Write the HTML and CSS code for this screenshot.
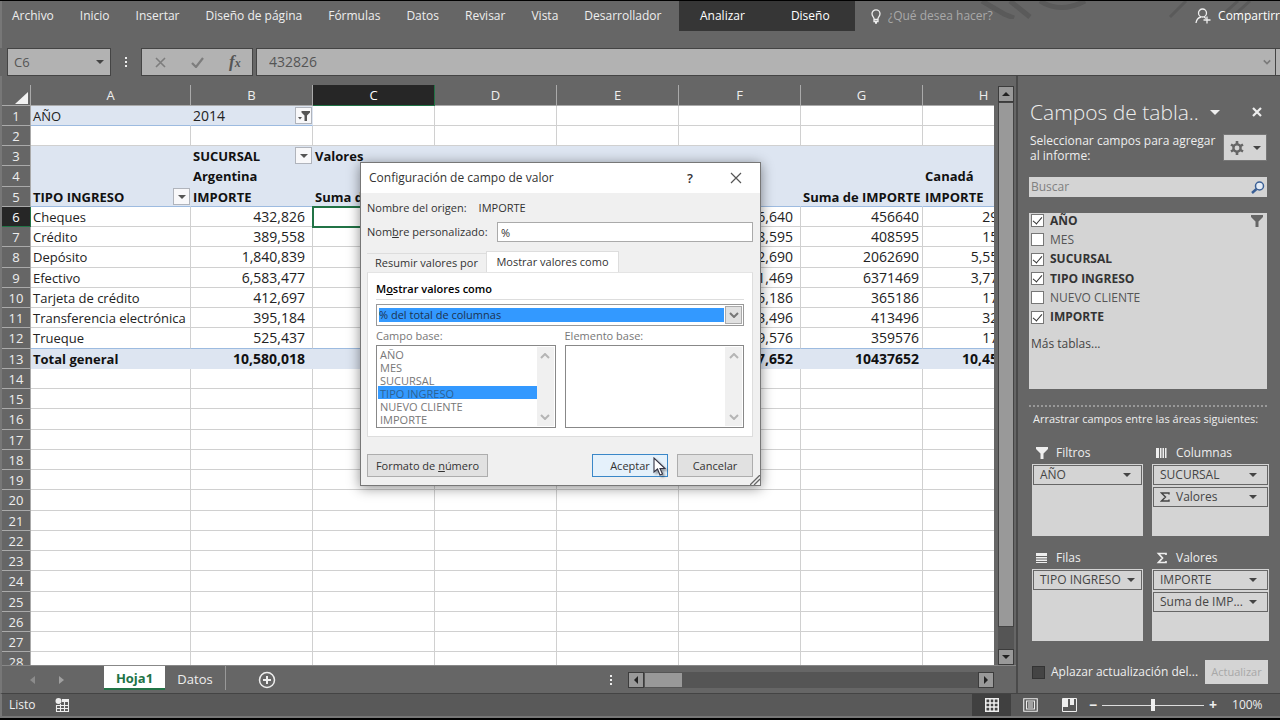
FILE: index.html
```html
<!DOCTYPE html>
<html lang="es">
<head>
<meta charset="utf-8">
<title>Hoja1 - Excel</title>
<link rel="stylesheet" href="styles.css">
</head>
<body>
<svg class="defs" aria-hidden="true">
  <symbol id="caret" viewBox="0 0 8 4"><path d="M0 0h8L4 4z" fill="currentColor"/></symbol>
  <symbol id="chev" viewBox="0 0 10 6"><path d="M1 1l4 4 4-4" fill="none" stroke="currentColor" stroke-width="2"/></symbol>
  <symbol id="funnel" viewBox="0 0 12 12"><path d="M0 0h12v2L7.500 6.500V12h-3V6.500L0 2z" fill="currentColor"/></symbol>
  <symbol id="sigma" viewBox="0 0 10 10"><path d="M9 2.500V1H1.500L5.500 5 1.500 9H9V7.500" fill="none" stroke="currentColor" stroke-width="1.400"/></symbol>
</svg>

<header class="ribbon">
  <svg class="ribbon-art" viewBox="0 0 300 18" aria-hidden="true"><g fill="none" stroke="#5a5a5a" stroke-width="5"><path d="M2 0l22 13 10 4M30 0l20 16M60 0q20 13 45 0" /><path d="M190 16L206 0M240 16L258 0M252 16L270 0" stroke-width="3"/></g></svg>
  <nav class="menu">
    <button>Archivo</button><button>Inicio</button><button>Insertar</button><button>Diseño de página</button><button>Fórmulas</button><button>Datos</button><button>Revisar</button><button>Vista</button><button>Desarrollador</button>
  </nav>
  <nav class="menu-tools"><button>Analizar</button><button>Diseño</button></nav>
  <label class="tell"><svg width="10" height="15" viewBox="0 0 10 15"><path d="M3 10.500V9.500C3 8 1 7.300 1 4.800a4 4 0 0 1 8 0C9 7.300 7 8 7 9.500v1zM3 10.500v2h4v-2M4 14h2" fill="none" stroke="#eee" stroke-width="1.300"/></svg><input type="text" placeholder="¿Qué desea hacer?"></label>
  <button class="share"><svg width="16" height="16" viewBox="0 0 16 16"><g fill="none" stroke="#eee" stroke-width="1.300"><circle cx="7.500" cy="5" r="4"/><path d="M1 15c.5-4 3-5.500 5-6M9 9l2 1.500M12 8.500v7M8.500 12h7"/></g></svg>Compartirr</button>
</header>

<div class="fbar">
  <button class="namebox"><span>C6</span><svg width="8" height="4"><use href="#caret"/></svg></button>
  <span class="dots"><i></i><i></i><i></i></span>
  <div class="fx">
    <svg width="11" height="11" viewBox="0 0 11 11"><path d="M1 1l9 9M10 1l-9 9" stroke="#7d7d7d" stroke-width="1.600"/></svg>
    <svg width="13" height="11" viewBox="0 0 13 11"><path d="M1 6l4 4 7-9" fill="none" stroke="#7d7d7d" stroke-width="2.200"/></svg>
    <span class="fxname">f<small>x</small></span>
  </div>
  <div class="formula"><input type="text" value="432826" aria-label="Barra de fórmulas"><svg width="8" height="6"><use href="#chev"/></svg></div>
  <span class="fend"></span>
</div>

<main class="work">
  <section class="book">
    <div class="gridrow">
      <div class="gridwrap">
        <table class="grid">
          <colgroup><col class="c0"><col class="ca"><col><col><col><col><col><col><col></colgroup>
          <thead><tr><th class="corner"><svg width="13" height="12"><path d="M13 0v12H0z" fill="#f2f2f2"/></svg></th><th>A</th><th>B</th><th class="on">C</th><th>D</th><th>E</th><th>F</th><th>G</th><th>H</th></tr></thead>
          <tbody>
          <tr class="page"><th>1</th><td class="p">AÑO</td><td class="p year"><div class="cell">2014<button class="dd" aria-label="Filtro"><svg width="12" height="10" viewBox="0 0 12 10"><path d="M3.500 0H12v1.500L9 4.500V10H6.500V4.500L3.500 1.500zM0 6h4L2 8.500z" fill="#555"/></svg></button></div></td><td></td><td></td><td></td><td></td><td></td><td></td></tr>
          <tr><th>2</th><td></td><td></td><td></td><td></td><td></td><td></td><td></td><td></td></tr>
          <tr class="head"><th>3</th><td></td><td><div class="cell">SUCURSAL<button class="dd" aria-label="Sucursal"><svg width="8" height="4"><use href="#caret"/></svg></button></div></td><td>Valores</td><td></td><td></td><td></td><td></td><td></td></tr>
          <tr class="head"><th>4</th><td></td><td>Argentina</td><td></td><td></td><td></td><td></td><td></td><td>Canadá</td></tr>
          <tr class="head last"><th>5</th><td><div class="cell">TIPO INGRESO<button class="dd" aria-label="Tipo ingreso"><svg width="8" height="4"><use href="#caret"/></svg></button></div></td><td>IMPORTE</td><td>Suma de IMPORTE</td><td></td><td></td><td></td><td>Suma de IMPORTE</td><td>IMPORTE</td></tr>
          <tr><th class="on">6</th><td>Cheques</td><td class="n">432,826</td><td class="active"></td><td></td><td></td><td class="n">456,640</td><td class="g">456640</td><td class="n">295,210</td></tr>
          <tr><th>7</th><td>Crédito</td><td class="n">389,558</td><td></td><td></td><td></td><td class="n">408,595</td><td class="g">408595</td><td class="n">154,320</td></tr>
          <tr><th>8</th><td>Depósito</td><td class="n">1,840,839</td><td></td><td></td><td></td><td class="n">2,062,690</td><td class="g">2062690</td><td class="n">5,552,140</td></tr>
          <tr><th>9</th><td>Efectivo</td><td class="n">6,583,477</td><td></td><td></td><td></td><td class="n">6,371,469</td><td class="g">6371469</td><td class="n">3,775,310</td></tr>
          <tr><th>10</th><td>Tarjeta de crédito</td><td class="n">412,697</td><td></td><td></td><td></td><td class="n">365,186</td><td class="g">365186</td><td class="n">174,200</td></tr>
          <tr><th>11</th><td>Transferencia electrónica</td><td class="n">395,184</td><td></td><td></td><td></td><td class="n">413,496</td><td class="g">413496</td><td class="n">325,400</td></tr>
          <tr class="pre"><th>12</th><td>Trueque</td><td class="n">525,437</td><td></td><td></td><td></td><td class="n">359,576</td><td class="g">359576</td><td class="n">176,100</td></tr>
          <tr class="head"><th>13</th><td>Total general</td><td class="n">10,580,018</td><td></td><td></td><td></td><td class="n">10,437,652</td><td class="g">10437652</td><td class="n">10,452,680</td></tr>
          <tr><th>14</th><td></td><td></td><td></td><td></td><td></td><td></td><td></td><td></td></tr>
          <tr><th>15</th><td></td><td></td><td></td><td></td><td></td><td></td><td></td><td></td></tr>
          <tr><th>16</th><td></td><td></td><td></td><td></td><td></td><td></td><td></td><td></td></tr>
          <tr><th>17</th><td></td><td></td><td></td><td></td><td></td><td></td><td></td><td></td></tr>
          <tr><th>18</th><td></td><td></td><td></td><td></td><td></td><td></td><td></td><td></td></tr>
          <tr><th>19</th><td></td><td></td><td></td><td></td><td></td><td></td><td></td><td></td></tr>
          <tr><th>20</th><td></td><td></td><td></td><td></td><td></td><td></td><td></td><td></td></tr>
          <tr><th>21</th><td></td><td></td><td></td><td></td><td></td><td></td><td></td><td></td></tr>
          <tr><th>22</th><td></td><td></td><td></td><td></td><td></td><td></td><td></td><td></td></tr>
          <tr><th>23</th><td></td><td></td><td></td><td></td><td></td><td></td><td></td><td></td></tr>
          <tr><th>24</th><td></td><td></td><td></td><td></td><td></td><td></td><td></td><td></td></tr>
          <tr><th>25</th><td></td><td></td><td></td><td></td><td></td><td></td><td></td><td></td></tr>
          <tr><th>26</th><td></td><td></td><td></td><td></td><td></td><td></td><td></td><td></td></tr>
          <tr><th>27</th><td></td><td></td><td></td><td></td><td></td><td></td><td></td><td></td></tr>
          <tr><th>28</th><td></td><td></td><td></td><td></td><td></td><td></td><td></td><td></td></tr>
          </tbody>
        </table>
      </div>
      <div class="vscroll">
        <button class="sb up" aria-label="Subir"><svg width="8" height="4"><use href="#caret"/></svg></button>
        <div class="vthumb"></div><div class="vtrack"></div>
        <button class="sb" aria-label="Bajar"><svg width="8" height="4"><use href="#caret"/></svg></button>
      </div>
    </div>
    <div class="tabs">
      <div class="tabnav"><svg width="5" height="8"><path d="M5 0v8L0 4z" fill="#8c8c8c"/></svg><svg width="5" height="8"><path d="M0 0v8l5-4z" fill="#a0a0a0"/></svg></div>
      <button class="tab sel">Hoja1</button><button class="tab">Datos</button>
      <button class="add" aria-label="Hoja nueva"><svg width="18" height="18" viewBox="0 0 18 18"><circle cx="9" cy="9" r="7.500" fill="none" stroke="#eee" stroke-width="1.500"/><path d="M9 5v8M5 9h8" stroke="#eee" stroke-width="2"/></svg></button>
      <span class="dots"><i></i><i></i><i></i></span>
      <div class="hscroll"><button class="sb left" aria-label="Izquierda"><svg width="8" height="4"><use href="#caret"/></svg></button><div class="hthumb"></div><button class="sb right" aria-label="Derecha"><svg width="8" height="4"><use href="#caret"/></svg></button></div>
    </div>

    <div class="dialog" role="dialog" aria-labelledby="dt">
      <div class="dtitle"><h2 id="dt">Configuración de campo de valor</h2><button class="help">?</button><button aria-label="Cerrar"><svg width="12" height="12" viewBox="0 0 12 12"><path d="M1 1l10 10M11 1L1 11" stroke="#555" stroke-width="1.200"/></svg></button></div>
      <div class="dbody">
        <div class="origin"><span>Nombre del origen:</span><span>IMPORTE</span></div>
        <div class="custom"><label for="nm">Nom<u>b</u>re personalizado:</label><input id="nm" type="text" value="%"></div>
        <div class="dtabs"><button>Resumir valores por</button><button class="sel">Mostrar valores como</button></div>
        <div class="pane">
          <label class="ptitle" for="sv">M<u>o</u>strar valores como</label>
          <div class="combo"><select id="sv"><option>% del total de columnas</option></select><span><svg width="10" height="6"><use href="#chev"/></svg></span></div>
          <div class="bases">
            <div><label for="cb">Campo base:</label>
              <div class="lbox"><select id="cb" size="6" disabled><option>AÑO</option><option>MES</option><option>SUCURSAL</option><option selected>TIPO INGRESO</option><option>NUEVO CLIENTE</option><option>IMPORTE</option></select><span class="lscroll"><svg class="flip" width="10" height="6"><use href="#chev"/></svg><svg width="10" height="6"><use href="#chev"/></svg></span></div></div>
            <div><label for="eb">Elemento base:</label>
              <div class="lbox"><select id="eb" size="6" disabled></select><span class="lscroll"><svg class="flip" width="10" height="6"><use href="#chev"/></svg><svg width="10" height="6"><use href="#chev"/></svg></span></div></div>
          </div>
        </div>
        <div class="dbtns"><button class="fmt">Formato de <u>n</u>úmero</button><button class="ok">Aceptar</button><button>Cancelar</button></div>
      </div>
      <svg class="grip" width="10" height="10" viewBox="0 0 10 10"><path d="M0 10L10 0M4 10l6-6" stroke="#666" stroke-width="1.300"/></svg>
      <svg class="cursor" width="13" height="19" viewBox="0 0 13 19"><path d="M1 1v14l3.500-3 2.500 6 2.500-1L7 11.500h5z" fill="#fff" stroke="#334" stroke-width="1.100"/></svg>
    </div>
  </section>

  <aside class="panel">
    <div class="ptop"><h1>Campos de tabla..</h1><svg width="10" height="5"><use href="#caret"/></svg><button aria-label="Cerrar"><svg width="10" height="10" viewBox="0 0 10 10"><path d="M1 1l8 8M9 1L1 9" stroke="#eee" stroke-width="2.200"/></svg></button></div>
    <div class="pdesc"><p>Seleccionar campos para agregar al informe:</p><button aria-label="Herramientas"><svg width="14" height="14" viewBox="0 0 14 14"><circle cx="7" cy="7" r="3.600" fill="none" stroke="#666" stroke-width="2.400"/><path d="M7 0v3M7 11v3M1 3.500l2.500 1.500M10.500 9l2.500 1.500M13 3.500L10.500 5M3.500 9L1 10.500" stroke="#666" stroke-width="2.600"/></svg><svg width="8" height="4"><use href="#caret"/></svg></button></div>
    <label class="search"><input type="text" placeholder="Buscar" aria-label="Buscar"><svg width="14" height="13" viewBox="0 0 14 13"><circle cx="8.500" cy="5" r="4" fill="#e4ecf6" stroke="#3a5f95" stroke-width="1.500"/><path d="M5.500 8L1 12" stroke="#3a5f95" stroke-width="2.400"/></svg></label>
    <div class="fields">
      <div class="flist">
        <label class="b"><input type="checkbox" checked>AÑO<svg width="12" height="12"><use href="#funnel"/></svg></label>
        <label><input type="checkbox">MES</label>
        <label class="b"><input type="checkbox" checked>SUCURSAL</label>
        <label class="b"><input type="checkbox" checked>TIPO INGRESO</label>
        <label><input type="checkbox">NUEVO CLIENTE</label>
        <label class="b"><input type="checkbox" checked>IMPORTE</label>
      </div>
      <a href="#">Más tablas...</a>
    </div>
    <p class="drag">Arrastrar campos entre las áreas siguientes:</p>
    <div class="areas">
      <section><h3><svg width="12" height="12"><use href="#funnel"/></svg>Filtros</h3><div class="drop"><button><span>AÑO</span><svg width="8" height="4"><use href="#caret"/></svg></button></div></section>
      <section><h3><svg width="12" height="12" viewBox="0 0 12 12"><path d="M0 1h3v10H0zM4 1h1.500v10H4zM6.500 1H8v10H6.500zM9 1h1.500v10H9z" fill="#eee"/></svg>Columnas</h3><div class="drop"><button><span>SUCURSAL</span><svg width="8" height="4"><use href="#caret"/></svg></button><button><svg class="sg" width="10" height="10"><use href="#sigma"/></svg><span>Valores</span><svg width="8" height="4"><use href="#caret"/></svg></button></div></section>
      <section><h3><svg width="12" height="12" viewBox="0 0 12 12"><path d="M0 1h11v3H0zM0 5h11v1.500H0zM0 7.500h11V9H0zM0 10h11v1H0z" fill="#eee"/></svg>Filas</h3><div class="drop"><button><span>TIPO INGRESO</span><svg width="8" height="4"><use href="#caret"/></svg></button></div></section>
      <section><h3><svg width="12" height="12" viewBox="0 0 12 12"><path d="M10 3V1.500H2.500L6.500 6l-4 4.500H10V9" fill="none" stroke="#eee" stroke-width="1.700"/></svg>Valores</h3><div class="drop"><button><span>IMPORTE</span><svg width="8" height="4"><use href="#caret"/></svg></button><button><span>Suma de IMP...</span><svg width="8" height="4"><use href="#caret"/></svg></button></div></section>
    </div>
    <div class="defer"><label><input type="checkbox">Aplazar actualización del...</label><button disabled>Actualizar</button></div>
  </aside>
</main>

<footer class="status">
  <span>Listo</span>
  <svg class="macro" width="14" height="14" viewBox="0 0 14 14"><circle cx="3.500" cy="3" r="3" fill="#eee"/><path d="M7 1h7v3H7z" fill="#eee"/><path d="M1.500 7v6.500h12V4M1.500 7.500h12M1.500 10.500h12M5.500 6v7.500M9.500 4v9.500" fill="none" stroke="#eee" stroke-width="1.100"/></svg>
  <div class="views">
    <button class="on" aria-label="Normal"><svg width="14" height="14" viewBox="0 0 14 14"><path d="M.75.75h12.500v12.500H.75zM5 0v14M9 0v14M0 5h14M0 9h14" fill="none" stroke="#eee" stroke-width="1.500"/></svg></button>
    <button aria-label="Diseño de página"><svg width="15" height="14" viewBox="0 0 15 14"><path d="M.75.75h13.500v12.500H.75zM3.500 3h8v8h-8zM5 5h5M5 7h5M5 9h5" fill="none" stroke="#eee" stroke-width="1.100"/></svg></button>
    <button aria-label="Salto de página"><svg width="15" height="14" viewBox="0 0 15 14"><path d="M.5.500h14v13H.5z" fill="none" stroke="#eee"/><path d="M1 1h5v8H1zM8 1h4v6H8z" fill="#eee"/></svg></button>
  </div>
  <div class="zoom"><b>−</b><input type="range" aria-label="Zoom" min="0" max="100" value="50"><b>+</b><span>100%</span></div>
</footer>
</body>
</html>
```
FILE: styles.css
```css
* { box-sizing: border-box; }
body { margin: 0; height: 100vh; display: flex; flex-direction: column; overflow: hidden; background: #666; color: #eee; font: 12px/16px "Open Sans", "Noto Sans", sans-serif; border-top: 1px solid #000; border-bottom: 2px solid #000; }
button, input, select { font: inherit; color: inherit; margin: 0; padding: 0; border: 0; border-radius: 0; background: none; outline: 0; }
h1, h2, h3, p { margin: 0; font: inherit; }
svg { flex: none; display: block; }
.defs { position: absolute; width: 0; height: 0; }

.ribbon { flex: none; position: relative; height: 47px; display: flex; align-items: flex-start; border-left: 2px solid #777; }
.ribbon-art { position: absolute; right: 0; top: 0; width: 300px; height: 18px; }
.menu, .menu-tools, .tell, .share { display: flex; align-items: center; height: 30px; position: relative; white-space: nowrap; }
.menu { padding-left: 10px; gap: 26px; width: 677px; flex: none; }
.menu-tools { width: 176px; padding-left: 21px; gap: 46px; background: #363636; color: #fff; }
.tell { flex: 1; padding-left: 16px; gap: 7px; }
.tell input { flex: 1; }
.tell input::placeholder { color: #a9a9a9; opacity: 1; }
.share { gap: 7px; color: #fff; }

.fbar { flex: none; display: flex; height: 28px; padding-left: 7px; color: #555; font-size: 14px; }
.namebox, .fx, .formula, .fend { background: #b2b2b2; border: 1px solid #444; }
.namebox { width: 104px; padding: 0 6px; display: flex; align-items: center; justify-content: space-between; font-size: 13px; }
.namebox svg { color: #444; }
.dots { display: flex; flex-direction: column; justify-content: center; gap: 2px; }
.dots i { width: 2px; height: 2px; background: #eee; }
.fbar .dots { width: 30px; padding-left: 14px; }
.fx { width: 112px; display: flex; align-items: center; gap: 25px; padding-left: 13px; }
.fxname { font: italic bold 17px "Liberation Serif", serif; }
.fxname small { font-size: 12px; }
.formula { flex: 1; margin-left: 3px; padding: 0 4px 0 12px; display: flex; align-items: center; color: #555; }
.formula input { flex: 1; }
.formula svg { color: #7a7a7a; }
.fend { width: 4px; border-right: 0; border-left: 0; }

.work { flex: 1; min-height: 0; display: flex; }
.book { flex: 1; min-width: 0; position: relative; display: flex; flex-direction: column; padding-top: 9px; border-left: 2px solid #777; border-right: 2px solid #4a4a4a; }
.gridrow { flex: 1; min-height: 0; display: flex; }
.gridwrap { flex: 1; min-width: 0; overflow: hidden; }
.grid { table-layout: fixed; width: 1043px; border-collapse: separate; border-spacing: 0; color: #222; font-size: 13px; line-height: 16px; }
.grid col { width: 122px; }
.grid .c0 { width: 29px; }
.grid .ca { width: 160px; }
.grid th { font-weight: 400; padding: 0; color: #eee; background: #666; border-right: 1px solid #aaa; border-bottom: 1px solid #aaa; font-size: 13px; }
.grid thead th { height: 21px; }
.grid th.on { background: #262626; color: #fff; border-color: #217346; }
.grid .corner { padding: 5px 0 0 13px; }
.grid tbody tr { height: 20px; }
.grid tbody tr:nth-child(4n) { height: 21px; }
.grid td { padding: 0 3px 0 2px; background: #fff; border-right: 1px solid #d0d0d0; border-bottom: 1px solid #d0d0d0; white-space: nowrap; }
.grid .p, .grid .head td { background: #dde5f1; border-color: #dde5f1; }
.grid .p, .grid .last td, .grid .pre td { border-bottom-color: #9dbbe0; }
.grid .head td { font-weight: 700; color: #111; }
.grid .n, .grid .g { text-align: right; font-size: 14px; }
.grid .n { padding-right: 7px; }
.grid .n:last-child { padding-right: 10px; }
.grid .year { font-size: 14px; }
.grid .active { outline: 2px solid #217346; outline-offset: -1px; }
.cell { display: flex; height: 19px; align-items: center; justify-content: space-between; margin-right: -3px; }
.dd { width: 17px; height: 17px; display: grid; place-items: center; background: #f8f8fa; border: 1px solid #b0b4bc; color: #555; }

.vscroll { width: 22px; padding: 1px 2px 0 4px; display: flex; flex-direction: column; background: #666; }
.sb { flex: none; width: 16px; height: 16px; display: grid; place-items: center; background: #999; border: 1px solid #3c3c3c; color: #222; }
.sb.up svg { transform: rotate(180deg); }
.sb.left svg { transform: rotate(90deg); }
.sb.right svg { transform: rotate(-90deg); }
.vthumb { flex: 1; width: 16px; background: #999; border: 1px solid #444; }
.vtrack { height: 22px; width: 16px; background: #555; }
.tabs { flex: none; height: 28px; display: flex; align-items: center; border-top: 1px solid #888; font-size: 13px; }
.tabnav { width: 102px; padding-left: 28px; display: flex; gap: 24px; }
.tab { height: 24px; align-self: flex-start; width: 61px; padding-top: 2px; }
.tab.sel { background: #fff; color: #217346; font-weight: 700; border-bottom: 2px solid #217346; }
.tab:not(.sel) { border-right: 1px solid #999; }
.add { margin-left: 32px; }
.tabs .dots { margin-left: auto; margin-right: 16px; }
.hscroll { width: 366px; margin-right: 22px; display: flex; background: #555; }
.hthumb { width: 39px; background: #999; border: 1px solid #555; margin-right: auto; }

.dialog { position: absolute; left: 358px; top: 86px; width: 401px; height: 324px; background: #f0f0f0; border: 1px solid #777; box-shadow: 0 2px 12px rgba(0,0,0,.45); color: #333; display: flex; flex-direction: column; font-size: 11px; }
.dtitle { flex: none; height: 30px; display: flex; align-items: center; background: #fff; padding: 0 18px 0 8px; font-size: 12px; }
.dtitle h2 { flex: 1; }
.help { font-weight: 600; font-size: 13px; margin-right: 37px; }
.dbody { flex: 1; padding: 6px 7px 8px 6px; display: flex; flex-direction: column; }
.origin { display: flex; gap: 12px; line-height: 18px; }
.custom { display: flex; align-items: center; justify-content: space-between; margin-top: 5px; white-space: nowrap; }
.custom input { width: 256px; height: 20px; background: #fff; border: 1px solid #aaa; padding: 0 3px; }
.dtabs { display: flex; align-items: flex-end; margin-top: 9px; }
.dtabs button { height: 19px; width: 119px; border-top: 1px solid #ddd; }
.dtabs .sel { height: 21px; width: 133px; background: #fff; border: 1px solid #ddd; border-bottom: 0; }
.pane { flex: 1; background: #fff; border: 1px solid #ddd; border-top-color: #e4e4e4; padding: 8px 8px 0 8px; display: flex; flex-direction: column; }
.ptitle { color: #000; font-weight: 600; border-bottom: 1px solid #ddd; height: 19px; margin-bottom: 4px; }
.combo { display: flex; height: 22px; border: 1px solid #999; padding: 1px; }
.combo select { appearance: none; flex: 1; height: 14px; margin: 2px 1px 0 1px; line-height: 14px; background: #39f; color: #1c3350; }
.combo span { width: 17px; display: grid; place-items: center; background: #e1e1e1; border: 1px solid #aaa; color: #777; }
.bases { display: flex; gap: 9px; color: #777; }
.bases > div { flex: 1; }
.bases label { display: block; height: 19px; line-height: 19px; }
.lbox { display: flex; height: 83px; border: 1px solid #888; padding: 1px; background: #fff; }
.lbox select { flex: 1; height: 79px; overflow: hidden; opacity: 1; color: #777; }
.lbox option { height: 13px; min-height: 0; line-height: 13px; padding: 0 2px; color: #777; }
.lbox option:checked { background: linear-gradient(#39f, #39f); color: #2d6293; }
.lscroll { width: 17px; background: #f0f0f0; display: flex; flex-direction: column; align-items: center; justify-content: space-between; padding: 6px 0; color: #b5b5b5; }
.flip { transform: rotate(180deg); }
.dbtns { display: flex; margin-top: 17px; gap: 9px; }
.dbtns button { width: 76px; height: 23px; background: #e1e1e1; border: 1px solid #adadad; }
.dbtns .fmt { width: 121px; margin-right: auto; }
.dbtns .ok { background: #e5f1fb; border-color: #3a87c8; }
.grip { position: absolute; right: 0; bottom: 0; }
.cursor { position: absolute; left: 292px; top: 294px; filter: drop-shadow(2px 2px 1px rgba(0,0,0,.35)); }

.panel { width: 262px; flex: none; padding: 22px 13px 9px 11px; display: flex; flex-direction: column; }
.ptop { display: flex; align-items: center; height: 28px; }
.ptop h1 { flex: 1; font-size: 21px; font-weight: 300; line-height: 28px; white-space: nowrap; padding-left: 1px; }
.ptop > svg { margin-right: 32px; }
.ptop button { margin-right: 5px; }
.pdesc { display: flex; justify-content: space-between; margin-top: 7px; line-height: 15px; }
.pdesc p { width: 188px; padding-left: 1px; }
.pdesc button { width: 44px; height: 27px; margin-top: 1px; background: #d4d4d4; border: 1px solid #777; color: #444; display: flex; align-items: center; justify-content: center; gap: 9px; }
.search { display: flex; align-items: center; flex: none; height: 20px; margin-top: 14px; padding: 0 2px; background: #d4d4d4; }
.search input { flex: 1; }
.search input::placeholder { color: #808080; opacity: 1; }
.fields { flex: none; height: 176px; margin-top: 16px; background: #d4d4d4; color: #555; padding: 0 4px 0 2px; }
.flist { height: 116px; margin-top: -2px; display: grid; grid-auto-rows: 1fr; }
.flist label { display: flex; align-items: center; gap: 6px; }
.flist .b { font-weight: 700; color: #333; }
.flist svg { margin-left: auto; color: #666; }
.fields a { display: block; margin-top: 9px; color: #444; text-decoration: none; }
input[type=checkbox] { appearance: none; flex: none; width: 13px; height: 13px; background: #fff; border: 1px solid #777; display: grid; place-items: center; }
input[type=checkbox]:checked::before { content: ""; width: 4px; height: 8px; margin-top: -2px; border: solid #333; border-width: 0 1px 1px 0; transform: rotate(40deg); }
.drag { margin-top: 16px; padding: 4px 0 0 4px; border-top: 2px dotted #999; white-space: nowrap; font-size: 11px; }
.areas { display: grid; grid-template-columns: 111px 1fr; column-gap: 9px; padding-left: 3px; margin-top: 14px; row-gap: 10px; margin-right: -1px; }
.areas h3 { display: flex; align-items: center; gap: 8px; height: 23px; padding-left: 4px; }
.drop { height: 72px; background: #d4d4d4; padding: 1px; display: flex; flex-direction: column; gap: 2px; color: #444; }
.drop button { height: 20px; border: 1px solid #666; display: flex; align-items: center; padding: 0 10px 0 6px; gap: 6px; white-space: nowrap; }
.drop span { flex: 1; text-align: left; }
.defer { margin-top: 19px; padding-left: 3px; margin-right: -1px; display: flex; align-items: center; justify-content: space-between; white-space: nowrap; }
.defer label { display: flex; align-items: center; gap: 6px; }
.defer input[type=checkbox] { background: #444; border-color: #333; }
.defer button { width: 63px; height: 24px; background: #d4d4d4; color: #a8a8a8; font-size: 11px; }

.status { flex: none; height: 25px; display: flex; align-items: center; background: #595959; border-top: 1px solid #444; border-bottom: 2px solid #777; border-left: 2px solid #777; padding-left: 7px; }
.macro { margin-left: 19px; }
.views { margin-left: auto; display: flex; align-self: stretch; }
.views button { width: 39px; display: grid; place-items: center; }
.views .on { background: #404040; }
.zoom { display: flex; align-items: center; width: 191px; gap: 5px; }
.zoom b { font-size: 14px; }
.zoom input { appearance: none; width: 102px; height: 12px; background: linear-gradient(#ddd, #ddd) center / 100% 1px no-repeat; }
.zoom input::-webkit-slider-thumb { appearance: none; width: 4px; height: 12px; background: #eee; }
.zoom span { margin-left: 10px; }
```
